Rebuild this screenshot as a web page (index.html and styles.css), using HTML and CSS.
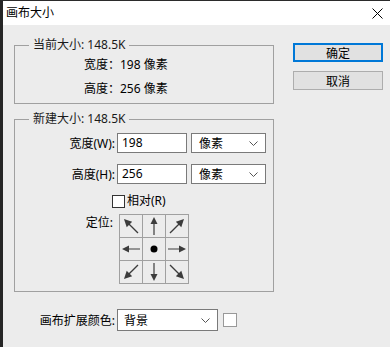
FILE: index.html
```html
<!DOCTYPE html>
<html lang="zh-CN">
<head>
    <meta charset="UTF-8">
    <title>画布大小</title>
    <link rel="stylesheet" href="styles.css">
</head>
<body>
    <div class="window">
        <div class="titlebar">
            <span class="title">画布大小</span>
            <svg class="close" width="11" height="11" viewBox="0 0 11 11">
                <path d="M0.5 0.5 L10.5 10.5 M10.5 0.5 L0.5 10.5" stroke="#000" stroke-width="1"/>
            </svg>
        </div>
        <div class="content">
            <div class="main">
                <fieldset class="group current">
                    <legend>当前大小: 148.5K</legend>
                    <div class="info">宽度：198 像素</div>
                    <div class="info">高度：256 像素</div>
                </fieldset>

                <fieldset class="group newsize">
                    <legend>新建大小: 148.5K</legend>
                    <div class="row">
                        <span class="label">宽度(W):</span>
                        <div class="input">198</div>
                        <div class="select small">像素<svg class="chev" width="9" height="5" viewBox="0 0 9 5"><polyline points="0.5,0.5 4.5,4.5 8.5,0.5" fill="none" stroke="#555"/></svg></div>
                    </div>
                    <div class="row">
                        <span class="label">高度(H):</span>
                        <div class="input">256</div>
                        <div class="select small">像素<svg class="chev" width="9" height="5" viewBox="0 0 9 5"><polyline points="0.5,0.5 4.5,4.5 8.5,0.5" fill="none" stroke="#555"/></svg></div>
                    </div>
                    <div class="check-row">
                        <span class="checkbox"></span>
                        <span>相对(R)</span>
                    </div>
                    <div class="anchor-row">
                        <span class="label">定位:</span>
                        <div class="anchor">
                            <div class="cell"><svg class="arrow nw" viewBox="0 0 22 22"><path d="M11 8 V20"/><polygon points="11,2 7.5,9 14.5,9"/></svg></div>
                            <div class="cell"><svg class="arrow" viewBox="0 0 22 22"><path d="M11 8 V20"/><polygon points="11,2 7.5,9 14.5,9"/></svg></div>
                            <div class="cell"><svg class="arrow ne" viewBox="0 0 22 22"><path d="M11 8 V20"/><polygon points="11,2 7.5,9 14.5,9"/></svg></div>
                            <div class="cell"><svg class="arrow w" viewBox="0 0 22 22"><path d="M11 8 V20"/><polygon points="11,2 7.5,9 14.5,9"/></svg></div>
                            <div class="cell"><svg viewBox="0 0 22 22"><circle cx="11" cy="11" r="3.5" fill="#000"/></svg></div>
                            <div class="cell"><svg class="arrow e" viewBox="0 0 22 22"><path d="M11 8 V20"/><polygon points="11,2 7.5,9 14.5,9"/></svg></div>
                            <div class="cell"><svg class="arrow sw" viewBox="0 0 22 22"><path d="M11 8 V20"/><polygon points="11,2 7.5,9 14.5,9"/></svg></div>
                            <div class="cell"><svg class="arrow s" viewBox="0 0 22 22"><path d="M11 8 V20"/><polygon points="11,2 7.5,9 14.5,9"/></svg></div>
                            <div class="cell"><svg class="arrow se" viewBox="0 0 22 22"><path d="M11 8 V20"/><polygon points="11,2 7.5,9 14.5,9"/></svg></div>
                        </div>
                    </div>
                </fieldset>

                <div class="bottom-row">
                    <span class="label">画布扩展颜色:</span>
                    <div class="select wide">背景<svg class="chev" width="9" height="5" viewBox="0 0 9 5"><polyline points="0.5,0.5 4.5,4.5 8.5,0.5" fill="none" stroke="#555"/></svg></div>
                    <span class="swatch"></span>
                </div>
            </div>
            <div class="buttons">
                <button class="btn primary">确定</button>
                <button class="btn">取消</button>
            </div>
        </div>
    </div>
</body>
</html>
```

FILE: styles.css
```css
html, body{
    margin: 0;
    padding: 0;
    background-color: #ececec;
}

body{
    font-family: "Noto Sans", "Noto Sans CJK SC", sans-serif;
    font-size: 12px;
    color: #000;
}

.window{
    width: 390px;
    height: 347px;
    box-sizing: border-box;
    border-top: 1px solid #2b2b2b;
    border-left: 3px solid #262626;
    background-color: #ececec;
}

.titlebar{
    display: flex;
    align-items: center;
    justify-content: space-between;
    height: 24px;
    background-color: #fff;
    padding: 0 7px 0 3px;
}

.title{
    line-height: 24px;
}

.close{
    display: block;
}

.content{
    display: flex;
    padding-top: 12px;
}

.main{
    margin-left: 11px;
    width: 260px;
}

.group{
    width: 260px;
    box-sizing: border-box;
    min-inline-size: 0;
    margin: 0;
    border: 1px solid #a0a0a0;
    padding: 0 0 0 14px;
}

.group legend{
    padding: 0 4px;
    line-height: 16px;
    color: #1a1a1a;
}

.current{
    padding-bottom: 2px;
}

.info{
    padding-left: 55px;
    line-height: 24px;
}

.newsize{
    margin-top: 7px;
    padding-bottom: 7px;
}

.row{
    display: flex;
    align-items: center;
    margin-top: 11px;
}

.newsize .row:first-of-type{
    margin-top: 6px;
}

.label{
    width: 86px;
    text-align: right;
    flex-shrink: 0;
}

.input{
    margin-left: 2px;
    width: 70px;
    height: 20px;
    box-sizing: border-box;
    border: 1px solid #7a7a7a;
    background-color: #fff;
    padding-left: 4px;
    line-height: 18px;
}

.select{
    display: flex;
    align-items: center;
    justify-content: space-between;
    box-sizing: border-box;
    border: 1px solid #7a7a7a;
    background-color: #fff;
}

.select.small{
    margin-left: 4px;
    width: 75px;
    height: 20px;
    padding: 0 7px 0 7px;
}

.select.wide{
    margin-left: 2px;
    width: 101px;
    height: 22px;
    padding: 0 7px 0 6px;
}

.chev{
    display: block;
}

.check-row{
    display: flex;
    align-items: center;
    margin-top: 9px;
    padding-left: 83px;
    line-height: 16px;
}

.checkbox{
    width: 13px;
    height: 13px;
    box-sizing: border-box;
    border: 1px solid #333;
    background-color: #fff;
    margin-right: 2px;
}

.anchor-row{
    display: flex;
    align-items: flex-start;
    margin-top: 5px;
}

.anchor-row .label{
    width: 84px;
    line-height: 16px;
    margin-top: 1px;
}

.anchor{
    margin-left: 6px;
    display: grid;
    grid-template-columns: repeat(3, 22px);
    grid-template-rows: repeat(3, 22px);
    gap: 1px;
    background-color: #a0a0a0;
    border: 1px solid #a0a0a0;
}

.cell{
    background-color: #ececec;
}

.cell svg{
    display: block;
    width: 22px;
    height: 22px;
}

.arrow path{
    stroke: #3c3c3c;
    stroke-width: 1.2;
}

.arrow polygon{
    fill: #3c3c3c;
}

/* diagonal arrows are a bit longer than the straight ones */
.arrow.ne{ transform: rotate(45deg) scale(1.1); }
.arrow.e{ transform: rotate(90deg); }
.arrow.se{ transform: rotate(135deg) scale(1.1); }
.arrow.s{ transform: rotate(180deg); }
.arrow.sw{ transform: rotate(225deg) scale(1.1); }
.arrow.w{ transform: rotate(270deg); }
.arrow.nw{ transform: rotate(315deg) scale(1.1); }

.bottom-row{
    display: flex;
    align-items: center;
    margin-top: 17px;
}

.bottom-row .label{
    width: 101px;
}

.swatch{
    margin-left: 5px;
    width: 14px;
    height: 14px;
    box-sizing: border-box;
    border: 1px solid #999;
    background-color: #fff;
}

.buttons{
    display: flex;
    flex-direction: column;
    gap: 9px;
    margin-left: 19px;
    padding-top: 6px;
}

.btn{
    width: 90px;
    height: 19px;
    box-sizing: border-box;
    margin: 0;
    padding: 0;
    border: 1px solid #adadad;
    background-color: #e1e1e1;
    font-family: "Noto Sans CJK SC", sans-serif;
    font-size: 12px;
    line-height: 16px;
    color: #000;
}

.btn.primary{
    border: 2px solid #0078d7;
}
```
